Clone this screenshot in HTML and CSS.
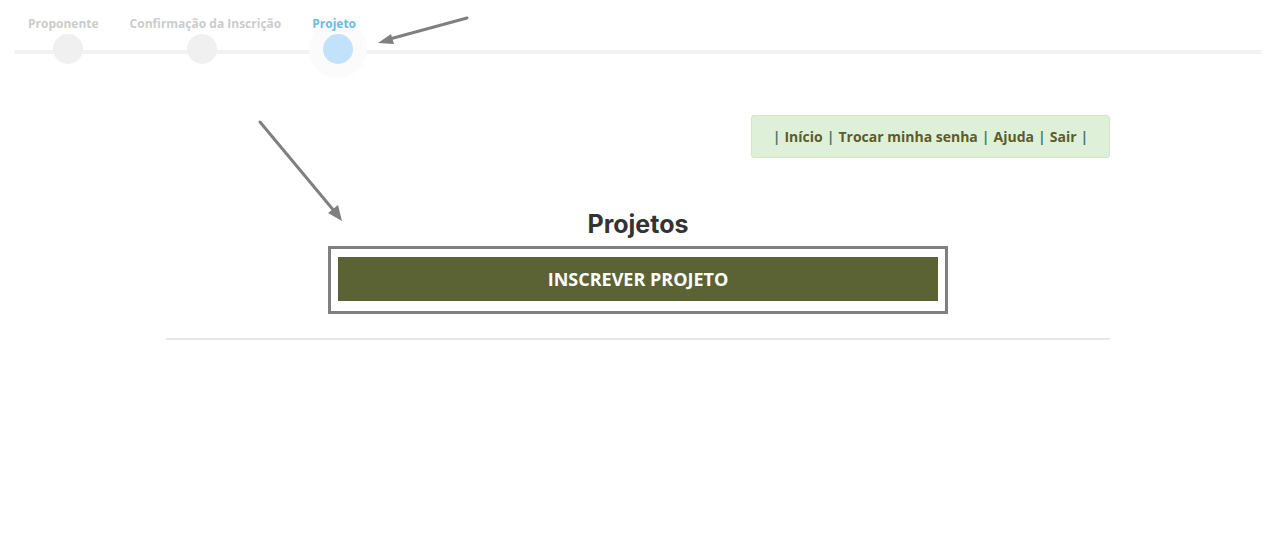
FILE: index.html
```html
<!DOCTYPE html>
<html lang="pt-BR">
<head>
<meta charset="utf-8">
<title>Projetos</title>
<link rel="stylesheet" href="styles.css">
</head>
<body>
<div class="steps">
  <div class="step">
    <span class="step-label">Proponente</span>
    <span class="step-dot"></span>
  </div>
  <div class="step">
    <span class="step-label">Confirmação da Inscrição</span>
    <span class="step-dot"></span>
  </div>
  <div class="step active">
    <span class="step-label">Projeto</span>
    <span class="step-dot"></span>
  </div>
</div>

<div class="container">
  <div class="menu-row">
    <div class="menu-box">
      <span class="pipe">|</span> <a href="#">Início</a> <span class="pipe">|</span> <a href="#">Trocar minha senha</a> <span class="pipe">|</span> <a href="#">Ajuda</a> <span class="pipe">|</span> <a href="#">Sair</a> <span class="pipe">|</span>
    </div>
  </div>

  <h1 class="title">Projetos</h1>
  <div class="action-frame">
    <button class="action-btn" type="button">INSCREVER PROJETO</button>
  </div>
  <hr class="divider">
</div>

<svg class="arrow arrow-top" width="110" height="40" viewBox="0 0 110 40">
  <line x1="97" y1="8" x2="16" y2="30" stroke="#808080" stroke-width="3" stroke-linecap="round"/>
  <polygon points="8,33 21,24 24,34" fill="#808080"/>
</svg>
<svg class="arrow arrow-mid" width="100" height="115" viewBox="0 0 100 115">
  <line x1="10" y1="10" x2="85" y2="100" stroke="#808080" stroke-width="3" stroke-linecap="round"/>
  <polygon points="92,109 78,101 88,93" fill="#808080"/>
</svg>
</body>
</html>
```

FILE: styles.css
```css
html, body {
  margin: 0;
  padding: 0;
  background: #ffffff;
  font-family: "Open Sans", "Liberation Sans", sans-serif;
}

.steps {
  position: relative;
  display: flex;
  gap: 31px;
  padding: 15px 0 0 28px;
  height: 52px;
}

.steps::before {
  content: "";
  position: absolute;
  left: 14px;
  right: 11px;
  top: 50px;
  height: 4px;
  border-radius: 2px;
  background: #f2f2f2;
}

.step {
  position: relative;
  display: flex;
  flex-direction: column;
  align-items: center;
}

.step-label {
  position: relative;
  z-index: 2;
  font-size: 12px;
  font-weight: 700;
  line-height: 17px;
  color: #cccccc;
  white-space: nowrap;
}

.step-dot {
  display: block;
  width: 30px;
  height: 30px;
  margin-top: 2px;
  border-radius: 50%;
  background: #f0f0f0;
}

.step:first-child .step-dot { transform: translateX(5px); }
.step:nth-child(2) .step-dot { transform: translateX(-3px); }

.step.active .step-label { color: #6bbde2; }
.step.active .step-dot {
  background: #c2e1fb;
  transform: translateX(4px);
  box-shadow: 0 0 0 14px #fbfbfb;
}

.container {
  width: 944px;
  margin: 0 auto;
  padding-left: 3px;
  padding-top: 48px;
}

.menu-row {
  display: flex;
  justify-content: flex-end;
}

.menu-box {
  width: 357px;
  height: 41px;
  display: flex;
  align-items: center;
  justify-content: center;
  gap: 4px;
  background: #dff0d8;
  border: 1px solid #d3e6c9;
  border-radius: 3px;
  font-size: 14px;
  font-weight: 700;
  white-space: nowrap;
}

.menu-box a {
  color: #5d5b2b;
  text-decoration: none;
}

.menu-box .pipe {
  color: #3b7d78;
  font-weight: 700;
}

.title {
  margin: 50px 0 0;
  text-align: center;
  font-family: "Inter", "Open Sans", sans-serif;
  font-size: 25px;
  font-weight: 700;
  line-height: 32px;
  color: #333333;
}

.action-frame {
  width: 600px;
  margin: 6px auto 0;
  padding: 8px 7px 10px;
  border: 3px solid #808080;
}

.action-btn {
  display: block;
  width: 100%;
  height: 44px;
  padding: 0;
  border: 0;
  background: #5b6334;
  color: #ffffff;
  font-family: "Open Sans", "Liberation Sans", sans-serif;
  font-size: 18px;
  font-weight: 700;
  cursor: pointer;
}

.divider {
  margin: 24px 0 0;
  border: 0;
  border-top: 2px solid #e6e6e6;
}

.arrow {
  position: absolute;
}

.arrow-top {
  left: 370px;
  top: 10px;
}

.arrow-mid {
  left: 250px;
  top: 112px;
}
```
